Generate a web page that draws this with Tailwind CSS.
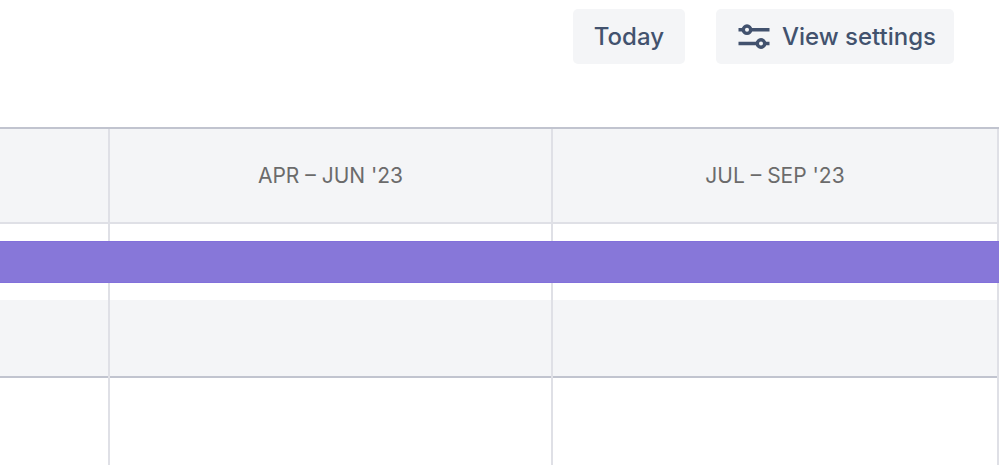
<!DOCTYPE html>
<html lang="en">
<head>
  <meta charset="UTF-8" />
  <meta name="viewport" content="width=device-width, initial-scale=1.0" />
  <title>Roadmap timeline</title>
  <script src="https://cdn.jsdelivr.net/npm/@tailwindcss/browser@4"></script>
</head>
<body class="flex min-h-screen flex-col overflow-x-hidden bg-white font-['Inter',sans-serif]">
  <!-- Toolbar -->
  <header class="flex justify-end gap-[31px] pt-[9px] pr-[45px] pb-[63px] text-2xl font-medium text-[#42526e]">
    <button type="button" class="h-[55px] rounded-[5px] bg-[#f4f5f7] px-[21px]">Today</button>
    <button type="button" class="flex h-[55px] items-center gap-3 rounded-[5px] bg-[#f4f5f7] pr-[18px] pl-[22px]">
      <svg class="h-7 w-8" viewBox="0 0 32 28" fill="none" stroke="currentColor" stroke-width="3.400" aria-hidden="true">
        <path d="M0.500 6.700H5M13 6.700H31.500M0.500 20.500H19M27 20.500H31.500" />
        <circle cx="9" cy="6.700" r="3.700" />
        <circle cx="23" cy="20.500" r="3.700" />
      </svg>
      View settings
    </button>
  </header>

  <!-- Timeline -->
  <main class="flex grow flex-col">
    <!-- Quarter labels -->
    <div class="grid h-[97px] grid-cols-[110fr_443fr_446fr] border-t-2 border-[#c1c4cf] bg-[#f4f5f7] text-[21px] text-[#6b6b6b]">
      <div class="border-r-2 border-b-2 border-[#dfe0e6]"></div>
      <div class="flex items-center justify-center border-r-2 border-b-2 border-[#dfe0e6]">APR – JUN '23</div>
      <div class="flex items-center justify-center border-r-2 border-b-2 border-[#dfe0e6]">JUL – SEP '23</div>
    </div>

    <!-- Epic bar -->
    <div class="relative grid h-[76px] grid-cols-[110fr_443fr_446fr]">
      <div class="border-r-2 border-[#dfe0e6]"></div>
      <div class="border-r-2 border-[#dfe0e6]"></div>
      <div class="border-r-2 border-[#dfe0e6]"></div>
      <div class="absolute inset-x-0 top-[17px] h-[42px] border-y border-[#8270db] bg-[#8777d9]"></div>
    </div>

    <!-- Empty shaded row -->
    <div class="grid h-[78px] grid-cols-[110fr_443fr_446fr] bg-[#f4f5f7]">
      <div class="border-r-2 border-[#dfe0e6]"><div class="h-full border-b-2 border-[#c1c4cf]"></div></div>
      <div class="border-r-2 border-[#dfe0e6]"><div class="h-full border-b-2 border-[#c1c4cf]"></div></div>
      <div class="border-r-2 border-[#dfe0e6]"><div class="h-full border-b-2 border-[#c1c4cf]"></div></div>
    </div>

    <div class="grid grow grid-cols-[110fr_443fr_446fr]">
      <div class="border-r-2 border-[#dfe0e6]"></div>
      <div class="border-r-2 border-[#dfe0e6]"></div>
      <div class="border-r-2 border-[#dfe0e6]"></div>
    </div>
  </main>
</body>
</html>
